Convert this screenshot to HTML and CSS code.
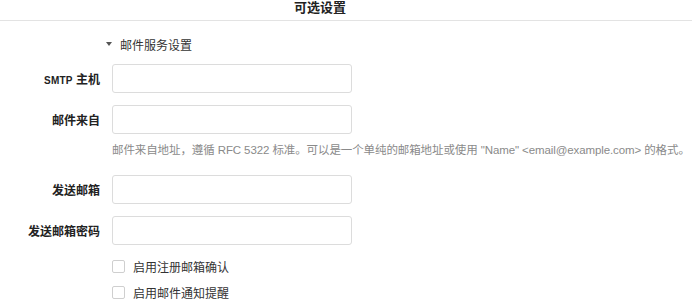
FILE: index.html
```html
<!DOCTYPE html>
<html lang="zh-CN">
<head>
    <meta charset="UTF-8">
    <title>可选设置</title>
    <link rel="stylesheet" href="styles.css">
</head>
<body>
    <div class="panel-header">
        <h2 class="panel-title">可选设置</h2>
    </div>

    <div class="panel-body">
        <div class="section-toggle">
            <span class="caret"></span> 邮件服务设置
        </div>

        <div class="form-row">
            <label class="form-label" for="smtpHost"><span class="abbr">SMTP</span> 主机</label>
            <input type="text" id="smtpHost" class="form-input">
        </div>

        <div class="form-row">
            <label class="form-label" for="mailFrom">邮件来自</label>
            <input type="text" id="mailFrom" class="form-input">
        </div>
        <p class="help-text">邮件来自地址，遵循 RFC 5322 标准。可以是一个单纯的邮箱地址或使用 "Name" &lt;email@example.com&gt; 的格式。</p>

        <div class="form-row">
            <label class="form-label" for="sendMail">发送邮箱</label>
            <input type="text" id="sendMail" class="form-input">
        </div>

        <div class="form-row">
            <label class="form-label" for="sendPass">发送邮箱密码</label>
            <input type="password" id="sendPass" class="form-input">
        </div>

        <label class="check-row">
            <span class="check-box"></span> 启用注册邮箱确认
        </label>
        <label class="check-row">
            <span class="check-box"></span> 启用邮件通知提醒
        </label>
    </div>
</body>
</html>
```

FILE: styles.css
```css
* {
    margin: 0;
    padding: 0;
    box-sizing: border-box;
    font-family: "Liberation Sans", "Noto Sans CJK SC", sans-serif;
}

body {
    background-color: #fff;
    color: #333;
    font-size: 12px;
}

.panel-header {
    height: 21px;
    border-bottom: 1px solid #e3e3e3;
    padding-left: 294px;
}

.panel-title {
    font-size: 13px;
    font-weight: bold;
    line-height: 16px;
    color: #222;
}

.panel-body {
    padding-top: 14px;
}

.section-toggle {
    display: flex;
    align-items: center;
    padding-left: 106px;
    height: 18px;
    color: #333;
    margin-bottom: 11px;
}

.caret {
    width: 0;
    height: 0;
    border-left: 3px solid transparent;
    border-right: 3px solid transparent;
    border-top: 4px solid #555;
    margin-right: 8px;
}

.form-row {
    display: flex;
    align-items: center;
    margin-bottom: 12px;
}

.form-label {
    width: 112px;
    padding-right: 12px;
    text-align: right;
    font-weight: bold;
    color: #222;
}

.abbr {
    font-size: 10px;
    letter-spacing: 0.2px;
}

.form-input {
    width: 240px;
    height: 29px;
    border: 1px solid #dcdcdc;
    border-radius: 3px;
    padding: 4px 8px;
    font-size: 12px;
}

.help-text {
    margin: -4px 0 17px 112px;
    color: #8a8a8a;
    font-size: 11.5px;
    letter-spacing: -0.1px;
    line-height: 16px;
    white-space: nowrap;
}

.check-row {
    display: flex;
    align-items: center;
    padding-left: 112px;
    height: 18px;
    margin-bottom: 8px;
    color: #333;
}

.check-box {
    width: 13px;
    height: 13px;
    border: 1px solid #cfcfcf;
    border-radius: 2px;
    margin-right: 8px;
}
```
